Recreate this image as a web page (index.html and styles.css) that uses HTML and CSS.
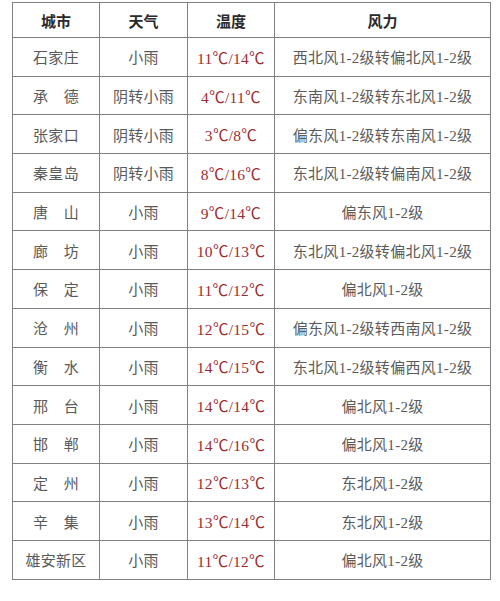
FILE: index.html
```html
<!DOCTYPE html>
<html lang="zh-CN">
<head>
<meta charset="utf-8">
<title>天气预报</title>
<link rel="stylesheet" href="styles.css">
</head>
<body>
<div class="wrap">
<table class="weather">
<colgroup>
<col class="c-city"><col class="c-wx"><col class="c-temp"><col class="c-wind">
</colgroup>
<thead>
<tr><th>城市</th><th>天气</th><th>温度</th><th>风力</th></tr>
</thead>
<tbody>
<tr><td>石家庄</td><td>小雨</td><td class="t">11℃/14℃</td><td>西北风1-2级转偏北风1-2级</td></tr>
<tr><td>承　德</td><td>阴转小雨</td><td class="t">4℃/11℃</td><td>东南风1-2级转东北风1-2级</td></tr>
<tr><td>张家口</td><td>阴转小雨</td><td class="t">3℃/8℃</td><td>偏东风1-2级转东南风1-2级</td></tr>
<tr><td>秦皇岛</td><td>阴转小雨</td><td class="t">8℃/16℃</td><td>东北风1-2级转偏南风1-2级</td></tr>
<tr><td>唐　山</td><td>小雨</td><td class="t">9℃/14℃</td><td>偏东风1-2级</td></tr>
<tr><td>廊　坊</td><td>小雨</td><td class="t">10℃/13℃</td><td>东北风1-2级转偏北风1-2级</td></tr>
<tr><td>保　定</td><td>小雨</td><td class="t">11℃/12℃</td><td>偏北风1-2级</td></tr>
<tr><td>沧　州</td><td>小雨</td><td class="t">12℃/15℃</td><td>偏东风1-2级转西南风1-2级</td></tr>
<tr><td>衡　水</td><td>小雨</td><td class="t">14℃/15℃</td><td>东北风1-2级转偏西风1-2级</td></tr>
<tr><td>邢　台</td><td>小雨</td><td class="t">14℃/14℃</td><td>偏北风1-2级</td></tr>
<tr><td>邯　郸</td><td>小雨</td><td class="t">14℃/16℃</td><td>偏北风1-2级</td></tr>
<tr><td>定　州</td><td>小雨</td><td class="t">12℃/13℃</td><td>东北风1-2级</td></tr>
<tr><td>辛　集</td><td>小雨</td><td class="t">13℃/14℃</td><td>东北风1-2级</td></tr>
<tr><td>雄安新区</td><td>小雨</td><td class="t">11℃/12℃</td><td>偏北风1-2级</td></tr>
</tbody>
</table>
</div>
</body>
</html>
```
FILE: styles.css
```css
html, body {
  margin: 0;
  padding: 0;
  background: #ffffff;
}
body {
  width: 500px;
  height: 601px;
  overflow: hidden;
  font-family: "Liberation Serif", "Noto Sans CJK SC", serif;
}
.wrap {
  padding: 2px 0 0 12px;
}
.weather {
  width: 478px;
  border-collapse: collapse;
  table-layout: fixed;
  border: 1px solid #666;
}
.c-city { width: 87px; }
.c-wx { width: 88px; }
.c-temp { width: 87px; }
.c-wind { width: 216px; }
.weather th,
.weather td {
  border: 1px solid #808080;
  padding: 0;
  text-align: center;
  vertical-align: middle;
  font-size: 15px;
  white-space: nowrap;
}
.weather thead tr {
  height: 35px;
}
.weather th {
  color: #2a2a2a;
  font-weight: bold;
}
.weather tbody tr {
  height: 38.7px;
}
.weather td {
  color: #5a5a5a;
  letter-spacing: 0.3px;
}
.weather td.t {
  color: #9e2b2e;
  font-size: 15.5px;
}
```
